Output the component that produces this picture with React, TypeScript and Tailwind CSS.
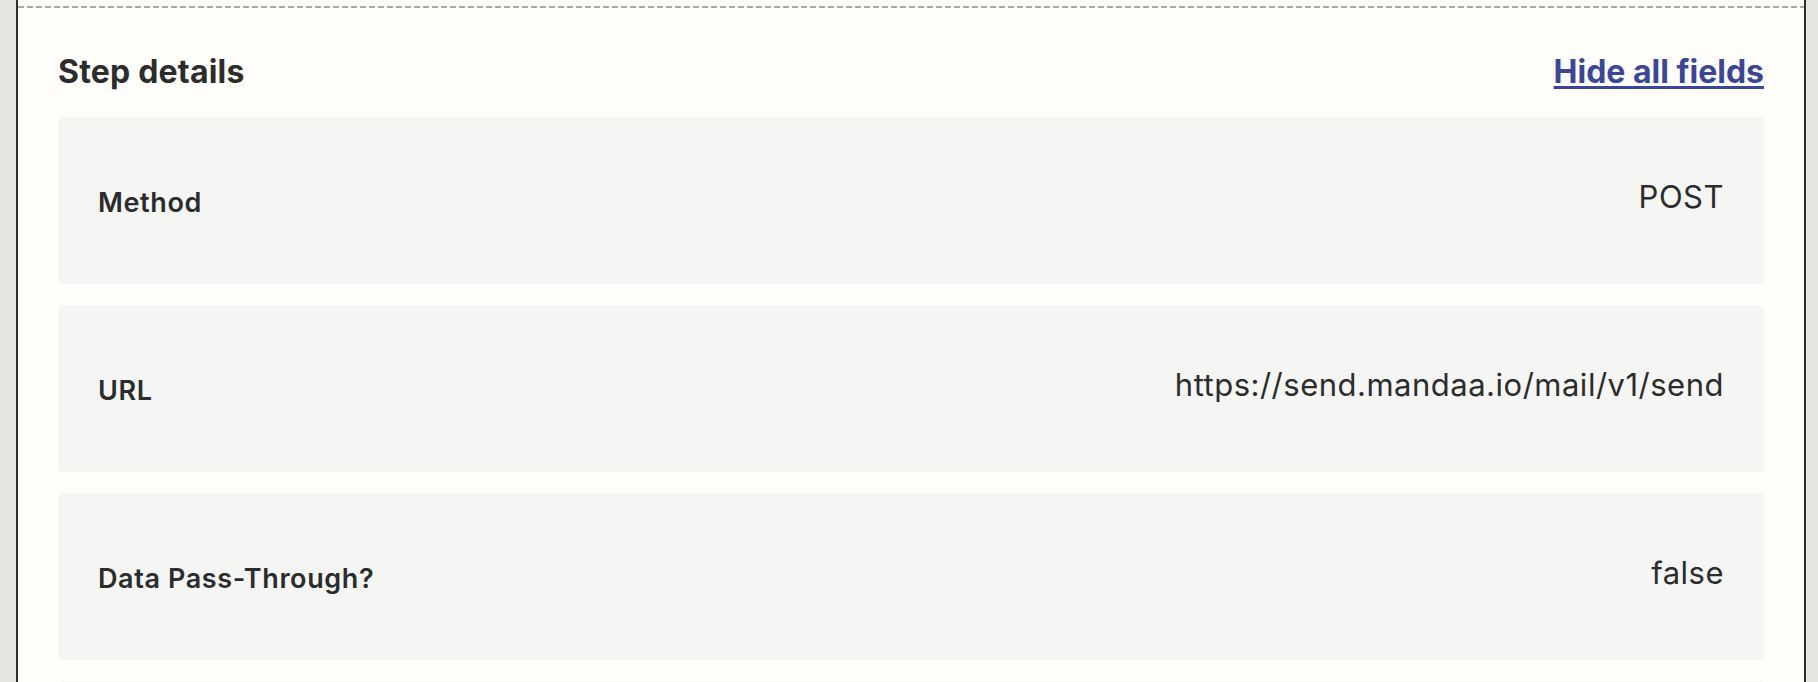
const fields = [
  { label: 'Method', value: 'POST' },
  { label: 'URL', value: 'https://send.mandaa.io/mail/v1/send' },
  { label: 'Data Pass-Through?', value: 'false' },
  // next row only peeks in at the bottom edge
  { label: '', value: '' },
];

const FieldRow = ({ label, value }: { label: string; value: string }) => {
  return (
    <div className="flex h-[167px] shrink-0 items-start justify-between rounded-[5px] bg-[#f5f5f3] px-10">
      <span className="pt-[70px] text-[27px] font-semibold leading-[32px] tracking-[0.6px] text-[#2b2d2d]">{label}</span>
      <span className="pt-[62px] text-[31px] font-normal leading-[36px] tracking-[0.5px] text-[#2b2d2d]">{value}</span>
    </div>
  );
};

const App = () => {
  return (
    <div className="flex h-[682px] w-full overflow-hidden bg-[#e7e6e2] font-['Inter','Liberation_Sans',sans-serif]">
      <div className="ml-4 mr-3 flex min-w-0 flex-1 flex-col border-x-2 border-[#2d2e2e] bg-[#fffdf9] pt-[6px]">
        {/* divider from the step above */}
        <div className="h-[2px] w-full shrink-0 bg-[repeating-linear-gradient(90deg,#a9a9a7_0_6px,transparent_6px_9px)]"></div>

        <div className="flex flex-col px-10">
          <div className="mt-11 flex h-10 items-center justify-between">
            <h2 className="text-[32px] font-bold leading-10 tracking-[0.2px] text-[#2b2d2d]">Step details</h2>
            <a
              href="#"
              className="text-[32px] font-bold leading-10 text-[#3d4694] underline decoration-[3px] underline-offset-[3px]"
            >
              Hide all fields
            </a>
          </div>

          <div className="mt-[25px] flex flex-col gap-[21px]">
            {fields.map((f, i) => (
              <FieldRow key={i} label={f.label} value={f.value} />
            ))}
          </div>
        </div>
      </div>
    </div>
  );
};

export default App;
